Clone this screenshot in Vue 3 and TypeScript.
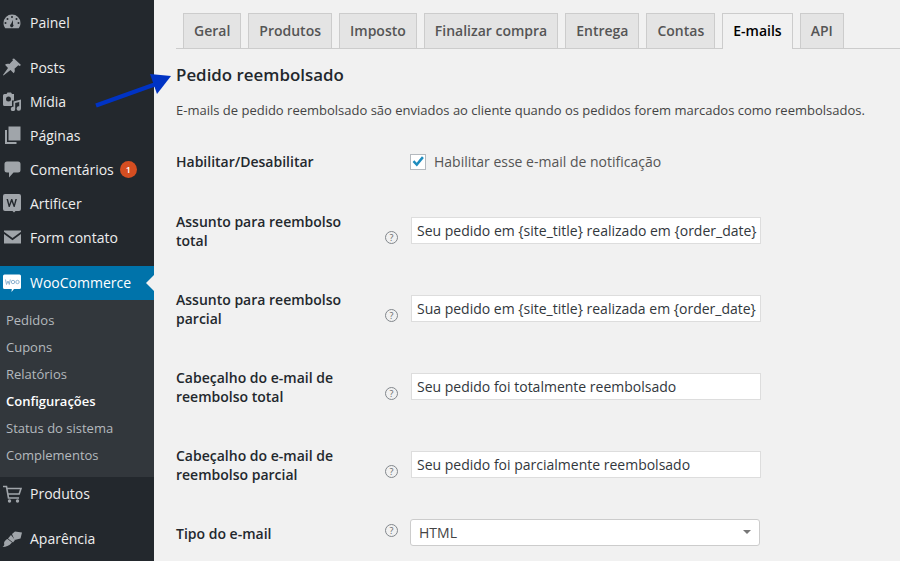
<template>
  <div class="page">
    <aside class="sidebar">
      <div v-for="group in menu" :key="group[0].label" class="menu-group">
        <div v-for="item in group" :key="item.label" class="menu-item">
          <svg class="menu-icon" viewBox="0 0 20 20" v-html="item.icon"></svg>
          <span>{{ item.label }}</span>
          <span v-if="item.badge" class="badge">{{ item.badge }}</span>
        </div>
      </div>
      <div class="menu-item current raised">
        <svg class="menu-icon woo" viewBox="0 0 20 20">
          <path d="M2.500 1.500h15a1.500 1.500 0 0 1 1.500 1.500v11.500a1.500 1.500 0 0 1-1.500 1.500h-5.500l-2.500 3 .3-3H2.500A1.500 1.500 0 0 1 1 14.500V3a1.500 1.500 0 0 1 1.500-1.500z" fill="#fff"/>
          <path d="M3.500 6.500l1 5 1.500-3.500 1.300 3.500 1-5" fill="none" stroke="#8fb4d0" stroke-width="1"/>
          <circle cx="11" cy="9" r="1.700" fill="none" stroke="#8fb4d0" stroke-width="1"/>
          <circle cx="15.500" cy="9" r="1.700" fill="none" stroke="#8fb4d0" stroke-width="1"/>
        </svg>
        <span>WooCommerce</span>
      </div>
      <div class="submenu">
        <div v-for="sub in submenu" :key="sub" class="sub-item" :class="{ active: sub === 'Configurações' }">{{ sub }}</div>
      </div>
      <div v-for="item in bottomMenu" :key="item.label" class="menu-item bottom raised">
        <svg class="menu-icon" viewBox="0 0 20 20" v-html="item.icon"></svg>
        <span>{{ item.label }}</span>
      </div>
    </aside>

    <main class="content">
      <nav class="tabs">
        <div v-for="tab in tabs" :key="tab" class="tab" :class="{ selected: tab === 'E-mails' }">{{ tab }}</div>
      </nav>
      <h2 class="title">Pedido reembolsado</h2>
      <p class="desc">E-mails de pedido reembolsado são enviados ao cliente quando os pedidos forem marcados como reembolsados.</p>

      <div class="form-row first">
        <label class="field-label">Habilitar/Desabilitar</label>
        <div class="help-col"></div>
        <div class="check-line">
          <span class="checkbox">
            <svg viewBox="0 0 16 16" width="16" height="16"><path d="M1.800 8l2-2 2.700 2.800L12.500 1.500l2.200 1.800L6.700 13z" fill="#1e8cbe"/></svg>
          </span>
          <span>Habilitar esse e-mail de notificação</span>
        </div>
      </div>

      <div v-for="row in textRows" :key="row.label" class="form-row">
        <label class="field-label">{{ row.label }}</label>
        <div class="help-col low"><span class="help">?</span></div>
        <div class="text-input">{{ row.value }}</div>
      </div>

      <div class="form-row last">
        <label class="field-label">Tipo do e-mail</label>
        <div class="help-col high"><span class="help">?</span></div>
        <div class="select"><span>HTML</span><i class="caret"></i></div>
      </div>
    </main>

    <!-- seta azul desenhada por cima da captura -->
    <svg class="arrow" width="180" height="110" viewBox="0 0 180 110">
      <path d="M96 105.500L156 84" stroke="#0033c4" stroke-width="4" fill="none"/>
      <path d="M150 74L171 76L157 94z" fill="#0033c4"/>
    </svg>
  </div>
</template>

<script setup lang="ts">
interface MenuItem {
  label: string
  icon: string
  badge?: number
}

const menu: MenuItem[][] = [
  [
    {
      label: 'Painel',
      icon: '<path fill-rule="evenodd" d="M10 2.500a8.500 8.500 0 0 1 8.500 8.500c0 2-.6 3.800-1.800 5.200H3.300C2.100 14.800 1.500 13 1.500 11A8.500 8.500 0 0 1 10 2.500zM10 4a1 1 0 1 0 0 2 1 1 0 0 0 0-2zM5.500 6a1 1 0 1 0 0 2 1 1 0 0 0 0-2zM14.500 6a1 1 0 1 0 0 2 1 1 0 0 0 0-2zM3.500 10a1 1 0 1 0 0 2 1 1 0 0 0 0-2zM16.500 10a1 1 0 1 0 0 2 1 1 0 0 0 0-2zM11 8L9 12a1.700 1.700 0 1 0 2 .3z"/>',
    },
  ],
  [
    {
      label: 'Posts',
      icon: '<path d="M12 1.500l7 6.500-1.500 1-1.200-.7-3.800 3.500c.6 1.700.3 3.300-.8 4.500l-3.200-3.300L1.500 18.500l-.5-.5 5-7-3-3.200c1.200-1.100 2.800-1.400 4.500-.8l3.500-3.800-.7-1.200z"/>',
    },
    {
      label: 'Mídia',
      icon: '<path fill-rule="evenodd" d="M2.500 3h2l1-1.500H9l1 1.500h2v6.500h-2V15H2.500Q1 15 1 13.500v-9Q1 3 2.500 3zM6.500 5.500a2.500 2.500 0 1 0 0 5 2.500 2.500 0 0 0 0-5z"/><path d="M11.500 10.500l7.500-2v9a2.200 2.200 0 1 1-1.800-2.200v-4.300l-4 1v6a2.200 2.200 0 1 1-1.700-2.200z"/>',
    },
    {
      label: 'Páginas',
      icon: '<path d="M6.500 1.500h12v14h-12z"/><path d="M3 5h2v12h9.500v2H3z"/>',
    },
    {
      label: 'Comentários',
      icon: '<path d="M5 2.500h11a2.500 2.500 0 0 1 2.500 2.500v6a2.500 2.500 0 0 1-2.500 2.500h-4.500L7 18.500v-5H5A2.500 2.500 0 0 1 2.500 11V5A2.500 2.500 0 0 1 5 2.500z"/>',
      badge: 1,
    },
    {
      label: 'Artificer',
      icon: '<path fill-rule="evenodd" d="M3 1h14q2 0 2 2v13q0 2-2 2h-3.500l-1.500 1.500L10.500 18H3q-2 0-2-2V3q0-2 2-2zM4.500 6l2.200 8h1l2-5.200 2 5.200h1l2.200-8h-1.500l-1.300 5.200-1.800-5.200h-1.200L7.300 11.200 6 6z"/>',
    },
    {
      label: 'Form contato',
      icon: '<path d="M2 3.500h17v1.200l-8.500 6.300L2 4.700z"/><path d="M2 7l8.500 6.300L19 7v9.500H2z"/>',
    },
  ],
]

const bottomMenu: MenuItem[] = [
  {
    label: 'Produtos',
    icon: '<path fill="none" stroke="currentColor" stroke-width="1.600" d="M1 2.500h3.500l2 11.500H17M5 4.500h14l-1.800 5.500H6"/><circle cx="7.500" cy="17" r="1.700"/><circle cx="15.500" cy="17" r="1.700"/>',
  },
  {
    label: 'Aparência',
    icon: '<path d="M10 5l3-2.500 7 1-1.500 6-6 1.500z"/><path d="M9 6l4 5-2 2.500-5-4z"/><path d="M5.500 10l4.500 3.500c-3 3.500-6 4.500-9.500 4.500 2-1 2-3 1.500-4 .5-2 2-3.500 3.500-4z"/>',
  },
]

const submenu = ['Pedidos', 'Cupons', 'Relatórios', 'Configurações', 'Status do sistema', 'Complementos']

const tabs = ['Geral', 'Produtos', 'Imposto', 'Finalizar compra', 'Entrega', 'Contas', 'E-mails', 'API']

const textRows = [
  { label: 'Assunto para reembolso total', value: 'Seu pedido em {site_title} realizado em {order_date}' },
  { label: 'Assunto para reembolso parcial', value: 'Sua pedido em {site_title} realizada em {order_date}' },
  { label: 'Cabeçalho do e-mail de reembolso total', value: 'Seu pedido foi totalmente reembolsado' },
  { label: 'Cabeçalho do e-mail de reembolso parcial', value: 'Seu pedido foi parcialmente reembolsado' },
]
</script>

<style>
html,
body {
  margin: 0;
  background: #f1f1f1;
}
</style>

<style scoped>
.page {
  position: relative;
  display: flex;
  width: 900px;
  height: 561px;
  overflow: hidden;
  background: #f1f1f1;
  font-family: "Open Sans", "Liberation Sans", sans-serif;
  color: #444;
}
.sidebar {
  width: 154px;
  flex: none;
  padding-top: 5px;
  box-sizing: border-box;
  background: #23282d;
}
.menu-group {
  margin-bottom: 11px;
}
.menu-group + .menu-group {
  margin-bottom: 12px;
}
.menu-item {
  position: relative;
  display: flex;
  align-items: center;
  height: 34px;
  padding-left: 2px;
  font-size: 14px;
  color: #eee;
}
.menu-item.raised {
  height: 33px;
  padding-bottom: 1px;
}
.menu-icon {
  width: 20px;
  height: 20px;
  margin-right: 8px;
  flex: none;
  fill: #a0a5aa;
  color: #a0a5aa;
}
.badge {
  width: 17px;
  height: 17px;
  margin-left: 6px;
  border-radius: 50%;
  background: #d54e21;
  color: #fff;
  font-size: 9px;
  font-weight: 600;
  line-height: 17px;
  text-align: center;
}
.current {
  background: #0073aa;
  color: #fff;
}
.current::after {
  content: "";
  position: absolute;
  right: 0;
  top: 50%;
  margin-top: -8px;
  border: 8px solid transparent;
  border-right-color: #f1f1f1;
  border-left: 0;
}
.woo {
  fill: #fff;
}
.submenu {
  padding: 7px 0 8px;
  background: #32373c;
}
.sub-item {
  height: 27px;
  padding-left: 6px;
  font-size: 13px;
  line-height: 27px;
  color: #b4b9be;
}
.sub-item.active {
  font-weight: 600;
  color: #fff;
}
.bottom + .bottom {
  margin-top: 11px;
}
.content {
  flex: 1;
  padding: 13px 0 0 22px;
}
.tabs {
  display: flex;
  gap: 7px;
  height: 36px;
  padding-left: 7px;
  box-sizing: border-box;
  border-bottom: 1px solid #ccc;
}
.tab {
  height: 35px;
  padding: 0 10px;
  box-sizing: border-box;
  border: 1px solid #ccc;
  border-bottom: 0;
  background: #e4e4e4;
  color: #555;
  font-size: 14px;
  font-weight: 600;
  line-height: 34px;
}
.tab.selected {
  height: 36px;
  background: #f1f1f1;
  color: #000;
}
.title {
  margin: 15px 0 0;
  font-size: 16.900px;
  font-weight: 600;
  line-height: 22px;
  color: #23282d;
}
.desc {
  margin: 14px 0 11px;
  font-size: 13px;
  line-height: 20px;
}
.form-row {
  display: flex;
  align-items: center;
  height: 78px;
  font-size: 14px;
}
.form-row.first {
  height: 61px;
}
.form-row.last {
  height: 58px;
}
.field-label {
  width: 200px;
  padding-right: 30px;
  box-sizing: border-box;
  flex: none;
  color: #23282d;
  font-size: 14px;
  font-weight: 600;
  line-height: 19px;
}
.help-col {
  width: 34px;
  flex: none;
  padding-left: 9px;
  box-sizing: border-box;
}
.help-col.low {
  padding-top: 13px;
}
.help-col.high {
  padding-bottom: 5px;
}
.help {
  display: block;
  width: 13px;
  height: 13px;
  box-sizing: border-box;
  border: 1px solid #82878c;
  border-radius: 50%;
  color: #666;
  font-size: 9px;
  line-height: 11px;
  text-align: center;
}
.check-line {
  display: flex;
  align-items: center;
  gap: 8px;
  color: #555;
}
.checkbox {
  width: 16px;
  height: 16px;
  box-sizing: border-box;
  border: 1px solid #b4b9be;
  background: #fff;
  display: flex;
  align-items: center;
  justify-content: center;
}
.text-input {
  width: 350px;
  height: 27px;
  margin: 0 0 1px 1px;
  padding-left: 5px;
  box-sizing: border-box;
  border: 1px solid #ddd;
  background: #fff;
  color: #32373c;
  line-height: 25px;
  white-space: nowrap;
  overflow: hidden;
}
.select {
  position: relative;
  width: 350px;
  height: 27px;
  margin-bottom: 1px;
  padding-left: 8px;
  box-sizing: border-box;
  border: 1px solid #ccc;
  border-radius: 3px;
  background: #fff;
  color: #444;
  line-height: 25px;
}
.caret {
  position: absolute;
  right: 8px;
  top: 10px;
  border: 4px solid transparent;
  border-top: 4px solid #777;
  border-bottom: 0;
}
.arrow {
  position: absolute;
  left: 0;
  top: 0;
  pointer-events: none;
}
</style>
